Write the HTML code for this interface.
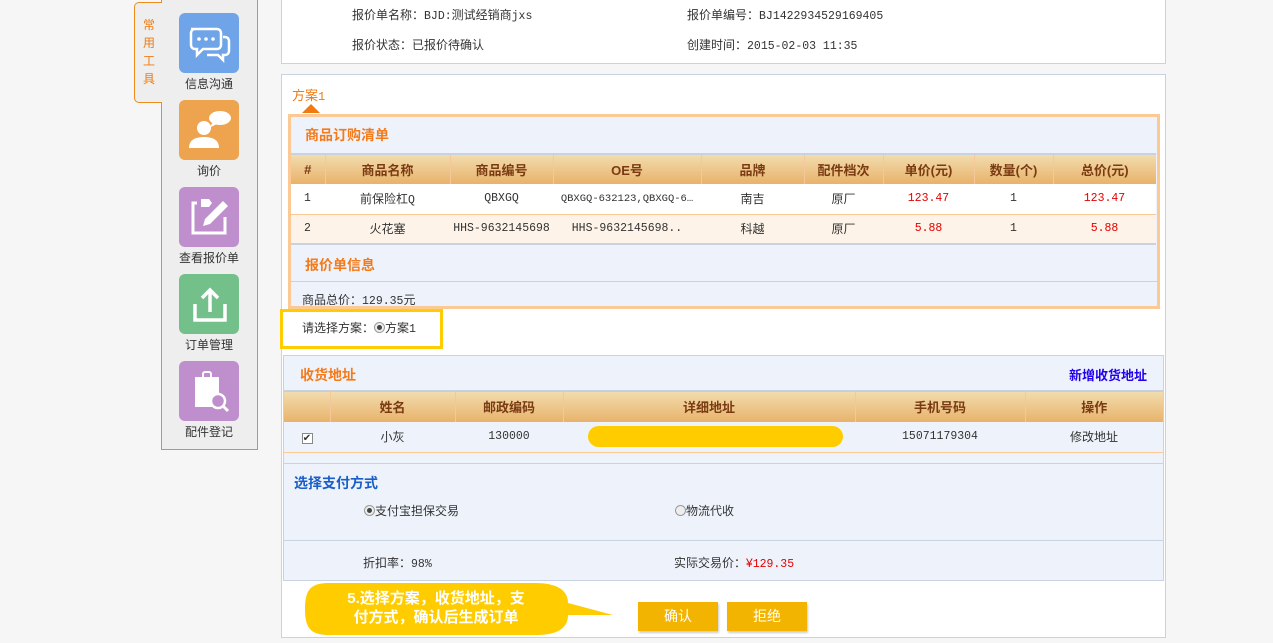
<!DOCTYPE html>
<html><head><meta charset="utf-8"><style>
*{margin:0;padding:0;box-sizing:border-box}
body{width:1273px;height:643px;overflow:hidden;background:#f6f6f6;font-family:"Liberation Sans","Noto Sans CJK SC",sans-serif;font-size:12px;color:#333;position:relative}
.a{position:absolute}
.mono{font-family:"Liberation Mono","Noto Sans CJK SC",monospace;font-size:11.5px}
.ic{position:absolute;left:179px;width:60px;height:60px;border-radius:6px}
.lb{position:absolute;left:161px;width:96px;text-align:center;font-size:12px;color:#333}
table{border-collapse:collapse;position:absolute}
td,th{text-align:center;padding:0}
th{background:linear-gradient(#f2dcae,#e8b26a);color:#7a3b12;font-weight:bold;font-size:13px;border-left:1px solid #f6c79a}
.red{color:#e60000}
.h{color:#f47a1a;font-weight:bold;font-size:14px}
.btn{position:absolute;top:602px;width:80px;height:29px;background:#f2b400;color:#fff;font-size:14px;text-align:center;line-height:29px;box-shadow:1px 2px 2px #ccc}
.rad{display:inline-block;width:11px;height:11px;border-radius:50%;border:1px solid #999;background:#eee;vertical-align:-1px;position:relative}
.rad.on::after{content:"";position:absolute;left:2px;top:2px;width:5px;height:5px;border-radius:50%;background:#444}
</style></head><body>

<div class="a" style="left:161px;top:-1px;width:97px;height:451px;background:#eeeeee;border:1px solid #f08a1c"></div>
<div class="a" style="left:134px;top:2px;width:28px;height:101px;background:#eeeeee;border:1px solid #f08a1c;border-right:none;border-radius:5px 0 0 5px"></div>
<div class="a" style="left:161px;top:3px;width:2px;height:99px;background:#eeeeee"></div>
<div class="a" style="left:143px;top:16px;width:14px;color:#f07a10;font-size:12px;line-height:18px">常<br>用<br>工<br>具</div>

<div class="ic" style="top:13px;background:#6fa5e8">
<svg width="60" height="60"><path d="M12 16h26a4 4 0 0 1 4 4v12a4 4 0 0 1-4 4H24l-6 6v-6h-2a4 4 0 0 1-4-4V20a4 4 0 0 1 4-4z" fill="none" stroke="#fff" stroke-width="2.5"/><path d="M44 24h2a4 4 0 0 1 4 4v10a4 4 0 0 1-4 4h-2v5l-5-5H28" fill="none" stroke="#fff" stroke-width="2.5"/><circle cx="20" cy="26" r="1.8" fill="#fff"/><circle cx="27" cy="26" r="1.8" fill="#fff"/><circle cx="34" cy="26" r="1.8" fill="#fff"/></svg></div>
<div class="lb" style="top:75px">信息沟通</div>
<div class="ic" style="top:100px;background:#eea44e">
<svg width="60" height="60"><circle cx="25" cy="28" r="7" fill="#fff"/><path d="M10 48c0-8 6-11 15-11s15 3 15 11z" fill="#fff"/><ellipse cx="41" cy="18" rx="11" ry="7" fill="#fff"/><path d="M34 22l-4 6 8-4z" fill="#fff"/></svg></div>
<div class="lb" style="top:162px">询价</div>
<div class="ic" style="top:187px;background:#bf8fcd">
<svg width="60" height="60"><path d="M18 16h-4v30h32V30" fill="none" stroke="#fff" stroke-width="3"/><path d="M44 14l5 5-18 18-7 2 2-7z" fill="#fff"/><path d="M22 12h8l3 4-3 4h-8z" fill="#fff"/></svg></div>
<div class="lb" style="top:249px">查看报价单</div>
<div class="ic" style="top:274px;background:#74c08a">
<svg width="60" height="60"><path d="M16 30v16h30V30" fill="none" stroke="#fff" stroke-width="3.5"/><path d="M31 38V16M23 24l8-8 8 8" fill="none" stroke="#fff" stroke-width="3.5"/></svg></div>
<div class="lb" style="top:336px">订单管理</div>
<div class="ic" style="top:361px;background:#bf8fcd">
<svg width="60" height="60"><rect x="16" y="16" width="24" height="30" fill="#fff"/><rect x="24" y="11" width="8" height="8" rx="2" fill="none" stroke="#fff" stroke-width="2"/><circle cx="39" cy="40" r="7" fill="#bf8fcd" stroke="#fff" stroke-width="2.5"/><path d="M44 45l5 5" stroke="#fff" stroke-width="3"/></svg></div>
<div class="lb" style="top:423px">配件登记</div>

<div class="a" style="left:281px;top:-2px;width:885px;height:66px;background:#fff;border:1px solid #c8d2e0"></div>
<div class="a" style="left:352px;top:6px">报价单名称：<span class="mono">BJD:</span>测试经销商<span class="mono">jxs</span></div>
<div class="a" style="left:352px;top:36px">报价状态：已报价待确认</div>
<div class="a" style="left:687px;top:6px">报价单编号：<span class="mono">BJ1422934529169405</span></div>
<div class="a" style="left:687px;top:36px">创建时间：<span class="mono">2015-02-03 11:35</span></div>

<div class="a" style="left:281px;top:74px;width:885px;height:564px;background:#fff;border:1px solid #c8d2e0"></div>
<div class="a" style="left:292px;top:85px;color:#f07a10;font-size:13px">方案<span class="mono" style="font-size:12px">1</span></div>
<div class="a" style="left:302px;top:104px;width:0;height:0;border-left:9px solid transparent;border-right:9px solid transparent;border-bottom:9px solid #f07a10"></div>

<div class="a" style="left:288px;top:114px;width:872px;height:195px;background:#eef3fb;border:3px solid #fcc893"></div>
<div class="a h" style="left:305px;top:125px">商品订购清单</div>
<table style="left:291px;top:153px;width:865px;border-top:2px solid #c8d2e0">
<tr style="height:30px"><th style="width:34px;border-left:none">#</th><th style="width:125px">商品名称</th><th style="width:103px">商品编号</th><th style="width:148px">OE号</th><th style="width:103px">品牌</th><th style="width:79px">配件档次</th><th style="width:91px">单价(元)</th><th style="width:79px">数量(个)</th><th>总价(元)</th></tr>
<tr style="height:30px;background:#fff;border-bottom:1px solid #fcc893"><td class="mono" style="text-align:left;padding-left:13px">1</td><td>前保险杠<span class="mono">Q</span></td><td class="mono">QBXGQ</td><td class="mono" style="font-size:10.5px">QBXGQ-632123,QBXGQ-6…</td><td>南吉</td><td>原厂</td><td class="mono red">123.47</td><td class="mono">1</td><td class="mono red">123.47</td></tr>
<tr style="height:30px;background:#fdf3e8;border-bottom:2px solid #c8d2e0"><td class="mono" style="text-align:left;padding-left:13px">2</td><td>火花塞</td><td class="mono">HHS-9632145698</td><td class="mono">HHS-9632145698..</td><td>科越</td><td>原厂</td><td class="mono red">5.88</td><td class="mono">1</td><td class="mono red">5.88</td></tr>
</table>
<div class="a h" style="left:305px;top:255px">报价单信息</div>
<div class="a" style="left:291px;top:281px;width:866px;height:1px;background:#c8d2e0"></div>
<div class="a" style="left:302px;top:291px">商品总价：<span class="mono">129.35</span>元</div>

<div class="a" style="left:280px;top:309px;width:163px;height:40px;border:3px solid #ffcc00;background:#fff"></div>
<div class="a" style="left:302px;top:319px">请选择方案：<span class="rad on"></span>方案<span class="mono">1</span></div>

<div class="a" style="left:283px;top:355px;width:881px;height:226px;background:#eef3fb;border:1px solid #c8d2e0"></div>
<div class="a h" style="left:300px;top:365px">收货地址</div>
<div class="a" style="left:1069px;top:365px;color:#2200ee;font-weight:bold;font-size:13px">新增收货地址</div>
<table style="left:284px;top:390px;width:879px;border-top:1px solid #c8d2e0">
<tr style="height:31px"><th style="width:46px;border-left:none"></th><th style="width:125px">姓名</th><th style="width:108px">邮政编码</th><th style="width:292px">详细地址</th><th style="width:170px">手机号码</th><th>操作</th></tr>
<tr style="height:31px;border-bottom:1px solid #fcc893"><td><span style="display:inline-block;width:11px;height:11px;border:1px solid #888;background:#fff;font-size:10px;line-height:9px">✔</span></td><td>小灰</td><td class="mono">130000</td><td><div style="margin:0 auto 0 25px;width:255px;height:21px;border-radius:11px;background:#ffcc00"></div></td><td class="mono">15071179304</td><td>修改地址</td></tr>
</table>
<div class="a" style="left:284px;top:463px;width:879px;height:1px;background:#c8d2e0"></div>
<div class="a" style="left:294px;top:473px;color:#1a5fc8;font-weight:bold;font-size:14px">选择支付方式</div>
<div class="a" style="left:364px;top:502px"><span class="rad on"></span>支付宝担保交易</div>
<div class="a" style="left:675px;top:502px"><span class="rad"></span>物流代收</div>
<div class="a" style="left:284px;top:540px;width:879px;height:1px;background:#c8d2e0"></div>
<div class="a" style="left:363px;top:554px">折扣率：<span class="mono">98%</span></div>
<div class="a" style="left:674px;top:554px">实际交易价：<span class="red">¥<span class="mono">129.35</span></span></div>

<svg class="a" style="left:300px;top:580px" width="320" height="60"><path d="M30 3h205c20 0 33 6 33 20l45 12-45 0c0 15-13 20-33 20H30C12 55 5 50 5 29S12 3 30 3z" fill="#ffcc00"/></svg>
<div class="a" style="left:313px;top:589px;width:246px;text-align:center;color:#fff;font-weight:bold;font-size:15px;line-height:19px;white-space:nowrap">5.选择方案，收货地址，支<br>付方式，确认后生成订单</div>
<div class="btn" style="left:638px">确认</div>
<div class="btn" style="left:727px">拒绝</div>
</body></html>
